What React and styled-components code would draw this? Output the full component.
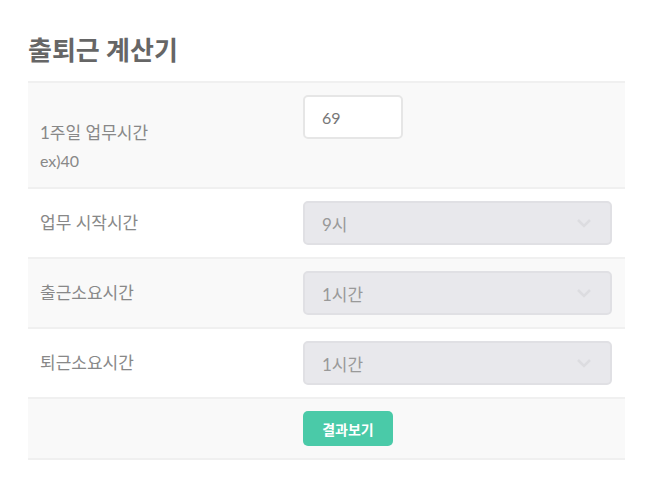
import React from "react";
import styled, { createGlobalStyle } from "styled-components";

const Global = createGlobalStyle`
  html, body { margin: 0; padding: 0; background: #fff; }
  body { font-family: Lato, "Noto Sans CJK KR", sans-serif; }
`;

const Page = styled.div`
  padding: 0 22px 0 28px;
  width: 597px;
`;

const Title = styled.h1`
  margin: 0;
  padding-top: 33px;
  height: 48px;
  font-size: 26px;
  line-height: 34px;
  font-weight: 700;
  color: #666;
  font-family: Lato, "Noto Sans CJK KR", sans-serif;
`;

const Table = styled.div`
  border-top: 2px solid #f0f0f0;
`;

const Row = styled.div`
  display: grid;
  grid-template-columns: 275px 1fr;
  background: ${(p) => (p.$striped ? "#f9f9f9" : "#fff")};
  border-bottom: 2px solid #f0f0f0;
`;

const Label = styled.div`
  padding: ${(p) => (p.$top ? "36px 12px 12px" : "12px")};
  display: flex;
  flex-direction: column;
  justify-content: ${(p) => (p.$top ? "flex-start" : "center")};
  font-size: 17px;
  line-height: 28px;
  color: #888;
`;

const Hint = styled.span`
  font-size: 16px;
`;

const Cell = styled.div`
  padding: 12px 13px 12px 0;
  display: flex;
  align-items: flex-start;
`;

const Input = styled.div`
  box-sizing: border-box;
  width: 100px;
  height: 44px;
  background: #fff;
  border: 2px solid #e6e6e6;
  border-radius: 5px;
  padding: 0 17px;
  display: flex;
  align-items: center;
  font-size: 16px;
  color: #777;
`;

const Select = styled.div`
  box-sizing: border-box;
  flex: 1;
  height: 44px;
  background: #e8e8ec;
  border: 2px solid #e0e0e4;
  border-radius: 5px;
  padding: 0 18px 0 17px;
  display: flex;
  align-items: center;
  justify-content: space-between;
  font-size: 17px;
  color: #999;
`;

const Button = styled.button`
  width: 90px;
  height: 35px;
  border: none;
  border-radius: 5px;
  background: #4acaa8;
  color: #fff;
  font-family: Lato, "Noto Sans CJK KR", sans-serif;
  font-size: 14px;
  font-weight: 700;
  padding: 0;
`;

const Chevron = () => (
  <svg width="16" height="10" viewBox="0 0 16 10">
    <polyline points="2,2 8,8 14,2" fill="none" stroke="#dcdce0" strokeWidth="2.5" />
  </svg>
);

const SelectRow = ({ label, value, striped }) => (
  <Row $striped={striped}>
    <Label>{label}</Label>
    <Cell>
      <Select>
        <span>{value}</span>
        <Chevron />
      </Select>
    </Cell>
  </Row>
);

export default function App() {
  return (
    <>
      <Global />
      <Page>
        <Title>출퇴근 계산기</Title>
        <Table>
          <Row $striped>
            <Label $top>
              <span>1주일 업무시간</span>
              <Hint>ex)40</Hint>
            </Label>
            <Cell>
              <Input>69</Input>
            </Cell>
          </Row>
          <SelectRow label="업무 시작시간" value="9시" />
          <SelectRow label="출근소요시간" value="1시간" striped />
          <SelectRow label="퇴근소요시간" value="1시간" />
          <Row $striped>
            <Label />
            <Cell>
              <Button>결과보기</Button>
            </Cell>
          </Row>
        </Table>
      </Page>
    </>
  );
}
